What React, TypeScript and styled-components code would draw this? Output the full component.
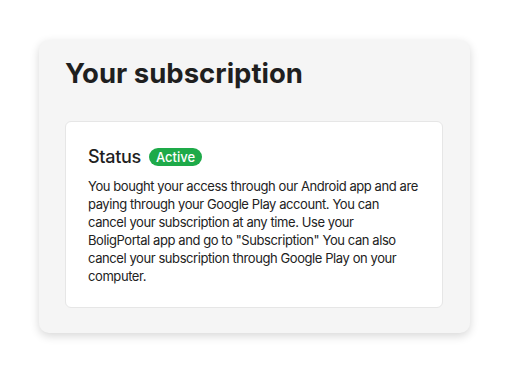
import styled, { createGlobalStyle } from 'styled-components';

const GlobalStyle = createGlobalStyle`
  body {
    margin: 0;
    background: #ffffff;
    font-family: Inter, "Noto Sans", sans-serif;
    color: #222222;
  }
`;

const StyledPage = styled.main`
  padding: 40px 39px;
`;

const StyledPanel = styled.section`
  width: 431px;
  box-sizing: border-box;
  padding: 17px 27px 25px 26px;
  background: #f5f5f5;
  border-radius: 10px;
  box-shadow: 0 3px 10px rgba(0, 0, 0, 0.16);
`;

const StyledTitle = styled.h1`
  margin: 0 0 32px;
  font-size: 27.5px;
  line-height: 32px;
  font-weight: 700;
  color: #1f1f1f;
`;

const StyledCard = styled.div`
  background: #ffffff;
  border: 1px solid #e6e6e6;
  border-radius: 6px;
  padding: 23px 18px 22px 22px;
`;

const StyledHeading = styled.div`
  display: flex;
  align-items: center;
  gap: 8px;
  margin-bottom: 8px;
`;

const StyledHeadingText = styled.h2`
  margin: 0;
  font-size: 18px;
  line-height: 24px;
  font-weight: 500;
  letter-spacing: -0.3px;
  color: #1f1f1f;
`;

const StyledBadge = styled.span<{ $tone: string }>`
  display: inline-flex;
  align-items: center;
  height: 18px;
  padding: 0 7px;
  border-radius: 9px;
  background: ${props => props.$tone};
  color: #ffffff;
  font-size: 13px;
  font-weight: 500;
  line-height: 1;
`;

const StyledBody = styled.p`
  margin: 0;
  font-size: 13px;
  line-height: 18px;
  letter-spacing: -0.42px;
  color: #222222;
`;

const StyledLine = styled.span`
  display: block;
  white-space: nowrap;
`;

const bodyLines = [
  'You bought your access through our Android app and are',
  'paying through your Google Play account. You can',
  'cancel your subscription at any time. Use your',
  'BoligPortal app and go to "Subscription" You can also',
  'cancel your subscription through Google Play on your',
  'computer.',
];

export default function App() {
  return (
    <>
      <GlobalStyle />
      <StyledPage>
        <StyledPanel>
          <StyledTitle>Your subscription</StyledTitle>
          <StyledCard>
            <StyledHeading>
              <StyledHeadingText>Status</StyledHeadingText>
              <StyledBadge $tone="#1eaa49">Active</StyledBadge>
            </StyledHeading>
            <StyledBody>
              {bodyLines.map(line => (
                <StyledLine key={line}>{line}</StyledLine>
              ))}
            </StyledBody>
          </StyledCard>
        </StyledPanel>
      </StyledPage>
    </>
  );
}
